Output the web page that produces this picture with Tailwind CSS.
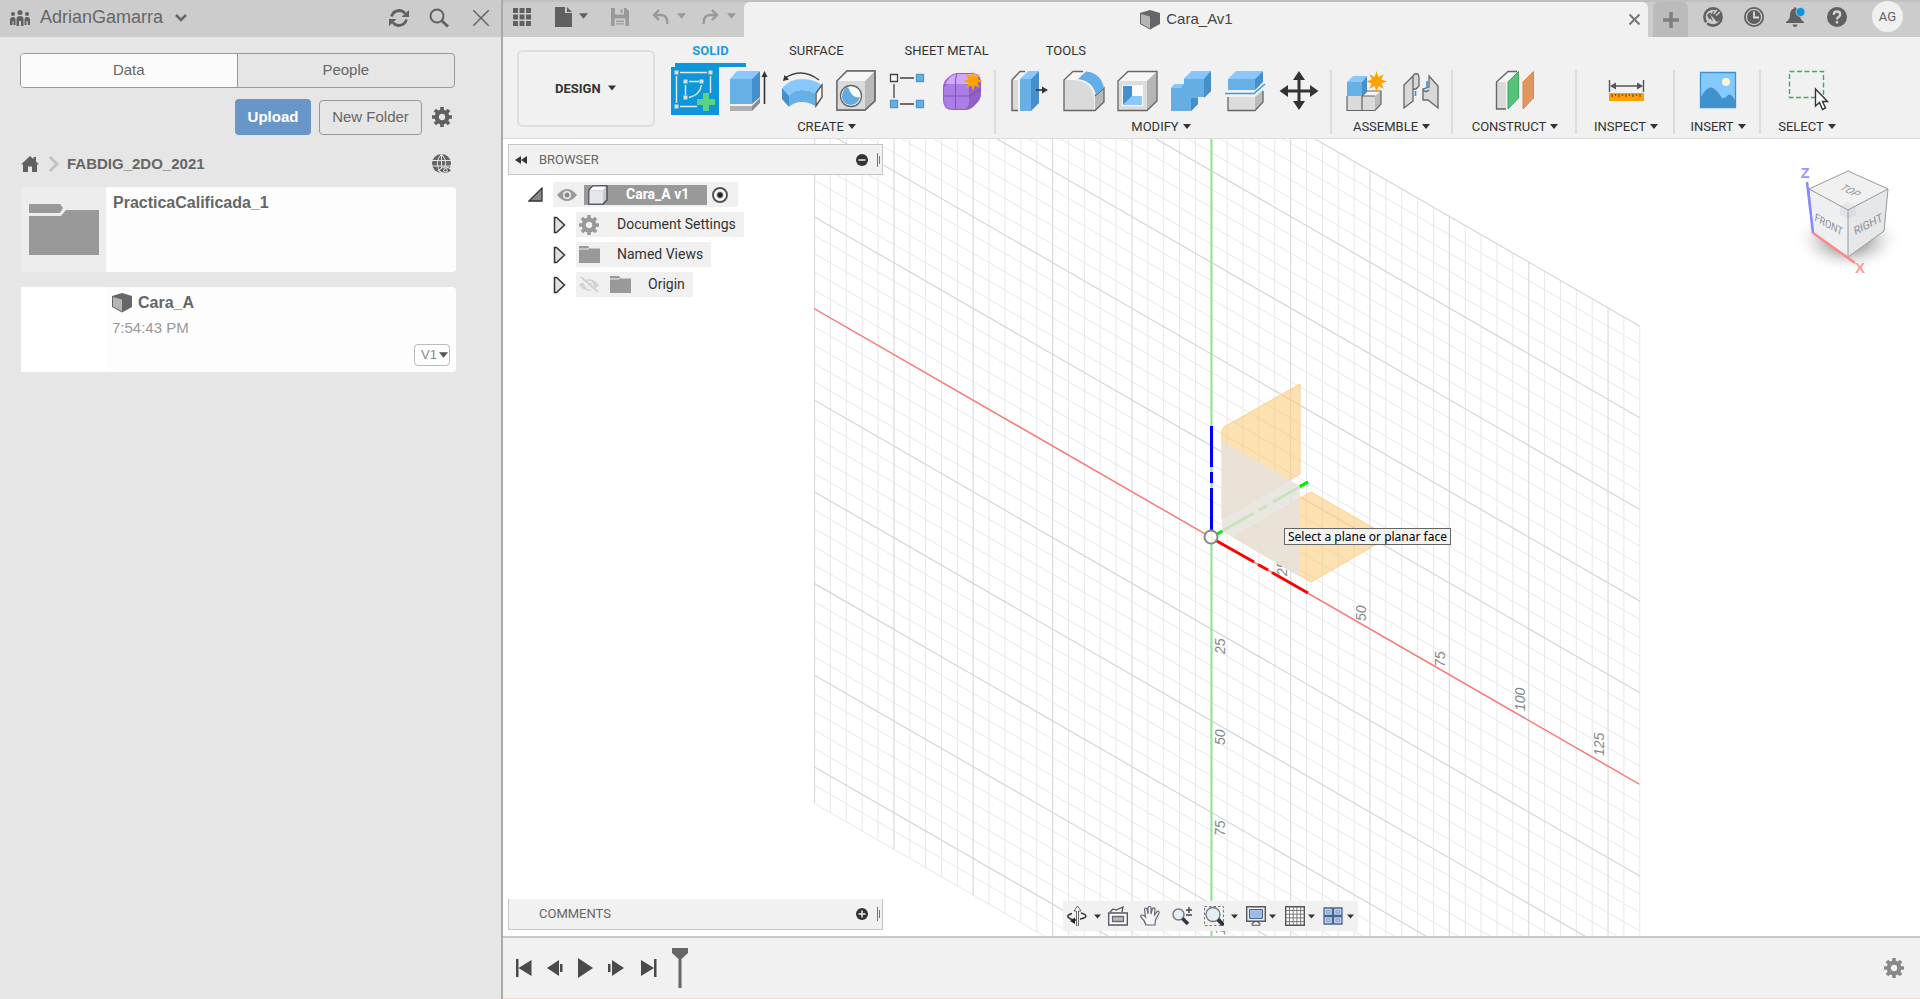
<!DOCTYPE html>
<html lang="en">
<head>
<meta charset="utf-8">
<title>Cara_A v1</title>
<script src="https://cdn.jsdelivr.net/npm/@tailwindcss/browser@4"></script>
</head>
<body class="flex h-screen overflow-hidden bg-[#f1f1f1] font-['Roboto','Liberation_Sans',sans-serif] text-[#333]">

<!-- Shared shapes -->
<svg class="hidden" aria-hidden="true">
  <symbol id="caret" viewBox="0 0 10 6"><path d="M0 0H10L5 6Z" fill="currentColor"/></symbol>
  <symbol id="part" viewBox="0 0 20 20"><path d="M0 3 10 0 20 3V14L10 19.500 0 14Z" fill="#666"/><path d="M1 4 10 6.500V18.500L1 13.500Z" fill="#b5b5b5"/></symbol>
  <symbol id="gear" viewBox="0 0 20 20"><g fill="none" stroke="currentColor"><circle cx="10" cy="10" r="5.300" stroke-width="4.200"/><path d="M10 0V4M10 16V20M0 10H4M16 10H20M2.900 2.900 5.600 5.600M14.400 14.400 17.100 17.100M2.900 17.100 5.600 14.400M14.400 5.600 17.100 2.900" stroke-width="3.600"/></g></symbol>
  <symbol id="folder" viewBox="0 0 21 17"><path d="M0 0H9L11 2.500H21V17H0Z" fill="#999"/><path d="M0 3H9L10.500 1.500" fill="none" stroke="#eee"/></symbol>
  <symbol id="expand" viewBox="0 0 13 18"><path d="M1.500 1.500H3.500L11.500 9 3.500 16.500H1.500Z" fill="#e0e0e0" stroke="#333" stroke-width="1.500"/></symbol>
  <symbol id="star" viewBox="0 0 20 20"><path d="M10 0 11.800 5.600 17 3 14.400 8.200 20 10 14.400 11.800 17 17 11.800 14.400 10 20 8.200 14.400 3 17 5.600 11.800 0 10 5.600 8.200 3 3 8.200 5.600Z" fill="#ffa200"/></symbol>
</svg>

<aside class="flex w-[503px] shrink-0 flex-col border-r-2 border-[#a9a9a9] bg-[#e6e6e6] font-['Liberation_Sans',sans-serif] text-[#666]">
  <header class="flex h-[37px] items-center bg-[#ccc] pr-3 pb-0.5 pl-[10px]">
    <svg class="h-4 w-5" viewBox="0 0 20 16" fill="#606060"><circle cx="10" cy="2.500" r="2.500"/><circle cx="3" cy="4" r="2"/><circle cx="17" cy="4" r="2"/><path d="M6.500 16V9Q6.500 6 10 6T13.500 9V16H11V11H9V16ZM0 15V10Q0 7 3 7 5.500 7 5.500 10V15H3.500V11H2.500V15ZM14.500 15V10Q14.500 7 17 7 20 7 20 10V15H17.800V11H16.500V15Z"/></svg>
    <button type="button" class="ml-[10px] flex items-center gap-3 text-[18px]">AdrianGamarra
      <svg class="h-2 w-3" viewBox="0 0 12 8" fill="none" stroke="#666" stroke-width="2.500"><path d="M1 1 6 6 11 1"/></svg></button>
    <div class="ml-auto flex items-center gap-5">
      <button type="button" aria-label="Refresh"><svg class="h-5 w-5" viewBox="0 0 20 20" fill="none" stroke="#606060" stroke-width="2.800"><path d="M2.500 8.500Q4 3 10 2.500 14 2.500 16 5.500"/><path d="M17.500 11.500Q16 17 10 17.500 6 17.500 4 14.500"/><path d="M20 2V9H12.500ZM0 18V11H7.500Z" fill="#606060" stroke="none"/></svg></button>
      <button type="button" aria-label="Search"><svg class="h-5 w-5" viewBox="0 0 20 20" fill="none" stroke="#606060"><circle cx="8" cy="8" r="6.500" stroke-width="2"/><path d="M13 13 19 18.500" stroke-width="3"/></svg></button>
      <button type="button" aria-label="Close" class="ml-1"><svg class="h-4 w-4" viewBox="0 0 16 16" stroke="#666" stroke-width="1.500"><path d="M0 0 16 16M16 0 0 16"/></svg></button>
    </div>
  </header>

  <div class="flex flex-col pt-4 pr-[46px] pl-5 text-[15px]">
    <div class="grid h-[35px] grid-cols-2 overflow-hidden rounded border border-[#999]">
      <button type="button" class="border-r border-[#999] bg-[#fbfbfb]">Data</button>
      <button type="button">People</button>
    </div>
    <div class="mt-[11px] flex items-center justify-end">
      <button type="button" class="h-9 w-[76px] rounded bg-[#6996c9] font-bold text-white">Upload</button>
      <button type="button" class="ml-2 h-[35px] w-[103px] rounded border border-[#999]">New Folder</button>
      <button type="button" aria-label="Settings" class="mr-[3px] ml-[10px]"><svg class="h-5 w-5 text-[#606060]"><use href="#gear"/></svg></button>
    </div>
    <nav class="mt-[18px] flex h-[22px] items-center" aria-label="Breadcrumb">
      <a href="#" aria-label="Home" class="ml-px"><svg class="h-4 w-[18px]" viewBox="0 0 18 16" fill="#606060"><path d="M9 0 12.500 3.200V1H15V5.500L18 8.500H16V16H11V10.500H7V16H2V8.500H0Z"/></svg></a>
      <svg class="ml-[9px] h-4 w-3" viewBox="0 0 12 16" fill="none" stroke="#c4c4c4" stroke-width="3"><path d="M2 1 9 8 2 15"/></svg>
      <a href="#" class="ml-[7px] font-bold">FABDIG_2DO_2021</a>
      <button type="button" aria-label="Open on the web" class="mr-[3px] ml-auto"><svg class="h-5 w-5" viewBox="0 0 20 20"><circle cx="9.500" cy="9.500" r="9.500" fill="#666"/><path d="M0 6.500H19M0 12H19M9.500 0V19M9.500 0Q1 9.500 9.500 19M9.500 0Q18 9.500 9.500 19" fill="none" stroke="#e6e6e6"/><path d="M6.500 16.500Q13.500 9.500 20 16.500 13.500 22 6.500 16.500Z" fill="#555" stroke="#e6e6e6" stroke-width="1.200"/><circle cx="13.500" cy="16.300" r="2.300" fill="#e6e6e6"/><circle cx="13.500" cy="16.300" r="1.200" fill="#555"/></svg></button>
    </nav>
    <ul class="mt-3 mr-[-1px] ml-px flex flex-col gap-[15px]">
      <li class="flex h-[85px] overflow-hidden rounded-r bg-[#fdfdfd]">
        <div class="flex w-[85px] items-center justify-center bg-[#ededed]"><svg class="h-[51px] w-[70px]" viewBox="0 0 70 51" fill="#999"><path d="M0 0H31L34 4 31 9H0ZM0 12H32L37 6H70V51H0Z"/></svg></div>
        <h2 class="px-[7px] pt-[6px] text-[16px] leading-5 font-bold">PracticaCalificada_1</h2>
      </li>
      <li class="flex h-[85px] overflow-hidden rounded-r bg-[#fdfdfd]">
        <div class="w-[85px] bg-white"></div>
        <div class="flex flex-1 flex-col px-[6px] pt-[6px] pb-[6px]">
          <h2 class="flex items-center gap-[6px] text-[16px] leading-5 font-bold"><svg class="h-5 w-5"><use href="#part"/></svg>Cara_A</h2>
          <p class="pt-[5px] leading-5 text-[#999]">7:54:43 PM</p>
          <div class="relative mt-auto self-end">
            <select aria-label="Version" class="block h-[22px] w-9 appearance-none rounded border border-[#bbb] bg-white pl-[6px] text-[13px] text-[#888]"><option>V1</option></select>
            <svg class="pointer-events-none absolute top-2 right-[2px] h-[6px] w-[9px] text-[#555]"><use href="#caret"/></svg>
          </div>
        </div>
      </li>
    </ul>
  </div>
</aside>

<main class="flex min-w-0 flex-1 flex-col">
  <header class="flex h-[37px] shrink-0 items-end border-t-2 border-[#c0c0c0] bg-[#ccc] text-[#606060]">
    <div class="flex h-[35px] w-[241px] shrink-0 items-center pb-[6px] pl-[10px]">
      <button type="button" aria-label="Show data panel"><svg class="h-[18px] w-[18px]" viewBox="0 0 18 18" fill="currentColor"><path d="M0 0H5V5H0ZM6.500 0H11.500V5H6.500ZM13 0H18V5H13ZM0 6.500H5V11.500H0ZM6.500 6.500H11.500V11.500H6.500ZM13 6.500H18V11.500H13ZM0 13H5V18H0ZM6.500 13H11.500V18H6.500ZM13 13H18V18H13Z"/></svg></button>
      <button type="button" aria-label="File" class="ml-6 flex items-center gap-[7px]"><svg class="h-5 w-[17px]" viewBox="0 0 17 20" fill="currentColor"><path d="M0 0H10V6H17V20H0ZM12 0 17 5H12Z"/></svg><svg class="mb-0.5 h-[6px] w-[9px]"><use href="#caret"/></svg></button>
      <button type="button" aria-label="Save" class="ml-[23px] text-[#999]"><svg class="h-[18px] w-[18px]" viewBox="0 0 18 18"><path d="M0 0H15L18 3V18H0Z" fill="currentColor"/><path d="M4 0H13V6.500H4ZM3.500 10.500H14.500V18H3.500Z" fill="#ccc"/><path d="M9.500 1.500H11.500V5H9.500ZM5 12.500H13V14H5ZM5 15.200H13V16.500H5Z" fill="currentColor"/></svg></button>
      <button type="button" aria-label="Undo" class="ml-[23px] flex items-center gap-2 text-[#999]"><svg class="h-4 w-[17px]" viewBox="0 0 17 16" fill="none" stroke="currentColor" stroke-width="2.400"><path d="M2 6H9Q15.500 6 15.500 15M7 1 2 6 7 11"/></svg><svg class="mb-0.5 h-[6px] w-[9px]"><use href="#caret"/></svg></button>
      <button type="button" aria-label="Redo" class="ml-4 flex items-center gap-2 text-[#999]"><svg class="h-4 w-[17px]" viewBox="0 0 17 16" fill="none" stroke="currentColor" stroke-width="2.400"><path d="M15 6H8Q1.500 6 1.500 15M10 1 15 6 10 11"/></svg><svg class="mb-0.5 h-[6px] w-[9px]"><use href="#caret"/></svg></button>
    </div>
    <div class="flex h-[35px] flex-1 items-center rounded-t-md bg-[#f1f1f1] pr-2 text-[#444]">
      <div class="flex flex-1 items-center justify-center gap-[6px] font-['Liberation_Sans',sans-serif] text-[15px]"><svg class="h-5 w-5"><use href="#part"/></svg>Cara_Av1</div>
      <button type="button" aria-label="Close document"><svg class="h-[11px] w-[11px]" viewBox="0 0 11 11" stroke="#777" stroke-width="2"><path d="M.500.500 10.500 10.500M10.500.500.500 10.500"/></svg></button>
    </div>
    <button type="button" aria-label="New document" class="ml-[5px] flex h-[35px] w-[35px] items-center justify-center rounded-t-md bg-[#bbb]"><svg class="h-4 w-4" viewBox="0 0 16 16" stroke="#808080" stroke-width="3.500"><path d="M8 0V16M0 8H16"/></svg></button>
    <div class="flex h-[35px] items-center pr-[17px] pb-[6px] pl-[15px]">
      <button type="button" aria-label="Extensions"><svg class="h-5 w-5" viewBox="0 0 20 20"><circle cx="10" cy="10" r="8.600" fill="none" stroke="currentColor" stroke-width="2.600"/><path d="M7 7 14 15 17 13 18 8 14 3 12 5 10 4 9 7 7 5.500 4 8 6 12 10 14Z" fill="currentColor"/><path d="M13 8.500 17 5M10.500 7 14 3M1 18 8 12" stroke="#ccc" stroke-width="1.500"/></svg></button>
      <button type="button" aria-label="Job status" class="ml-[21px]"><svg class="h-5 w-5" viewBox="0 0 20 20"><circle cx="10" cy="10" r="10" fill="currentColor"/><circle cx="10" cy="10" r="7.600" fill="none" stroke="#ccc" stroke-width="1.300"/><path d="M10 4.500V10.500H15" fill="none" stroke="#ddd" stroke-width="1.800"/></svg></button>
      <button type="button" aria-label="Notifications" class="ml-[22px]"><svg class="h-5 w-[19px]" viewBox="0 0 19 20"><path d="M9 0Q10 0 10 1.500 14 2.500 14 8 14 13 18 15V16H0V15Q4 13 4 8 4 2.500 8 1.500 8 0 9 0ZM6.500 17.500H11.500Q11 20 9 20T6.500 17.500Z" fill="currentColor"/><circle cx="14.500" cy="5" r="4.500" fill="#0a96dc" stroke="#ccc" stroke-width=".800"/></svg></button>
      <button type="button" aria-label="Help" class="ml-[22px]"><svg class="h-5 w-5" viewBox="0 0 20 20"><circle cx="10" cy="10" r="10" fill="currentColor"/><path d="M6.800 7.800Q6.800 4.500 10 4.500T13.200 7.500Q13.200 9 11.500 10 10 11 10 12.500M10 14V16.400" fill="none" stroke="#d4d4d4" stroke-width="2.300"/></svg></button>
      <button type="button" aria-label="Account" class="ml-[25px] h-[31px] w-[31px] rounded-full bg-[#f0f0f0] text-[13px]">AG</button>
    </div>
  </header>

  <div class="flex h-[102px] shrink-0 border-b border-[#dcdcdc] pl-[14px]">
    <div class="relative mt-[13px] h-[77px] w-[138px] shrink-0">
      <select aria-label="Workspace" class="h-full w-full appearance-none rounded-md border-2 border-[#dedede] bg-[#f1f1f1] pl-9 text-[13px] font-bold"><option>DESIGN</option></select>
      <svg class="pointer-events-none absolute top-[35px] right-[39px] h-[6px] w-2"><use href="#caret"/></svg>
    </div>
    <div class="ml-2 flex flex-col">
      <nav class="ml-3 flex h-[30px] items-end text-[13px] leading-5" aria-label="Toolbar tabs">
        <a href="#" class="h-[26px] w-[71px] border-b-4 border-[#0d96d9] text-center font-bold text-[#1b9cdc]">SOLID</a>
        <a href="#" class="ml-[43px] h-[26px]">SURFACE</a>
        <a href="#" class="ml-[61px] h-[26px]">SHEET METAL</a>
        <a href="#" class="ml-[57px] h-[26px]">TOOLS</a>
      </nav>
      <div class="flex text-[13px]">
        <section class="relative flex w-[333px] flex-col items-center">
          <div class="flex">
            <button type="button" aria-label="Create sketch" class="w-[54px] px-[3px]"><svg class="h-12 w-12" viewBox="0 0 48 48" fill="none"><path d="M0 0H48V48H0Z" fill="#0d96d9"/><path d="M9 5.500H36M5.500 9V36M39.500 9V26M9 39.500H26M18 14.500H28M14.500 18V28M30.500 18Q29 28 18 30.500" stroke="#e8e8e8" stroke-width="1.400"/><path d="M3.500 3.500H7.500V7.500H3.500ZM37.500 3.500H41.500V7.500H37.500ZM3.500 37.500H7.500V41.500H3.500ZM12.500 12.500H16.500V16.500H12.500ZM28.500 12.500H32.500V16.500H28.500ZM12.500 28.500H16.500V32.500H12.500Z" fill="#dcdcdc"/><path d="M35 26V44M26 35H44" stroke="#5ad28a" stroke-width="6"/></svg></button>
            <button type="button" aria-label="Extrude" class="w-[54px] px-[3px]"><svg class="h-12 w-12" viewBox="0 0 48 48"><path d="M5 12 12 4H35L27 12Z" fill="#8ac8fb"/><path d="M5 12H27V37H5Z" fill="#66b0e5"/><path d="M27 12 35 4V30L27 37Z" fill="#4590cc"/><path d="M5 39H27V44H5Z" fill="#b0b0b0"/><path d="M27 39 35 31V36L27 44Z" fill="#8c8c8c"/><path d="M39.500 8V37" stroke="#333" stroke-width="1.600"/><path d="M36.500 10 39.500 4 42.500 10Z" fill="#333"/></svg></button>
            <button type="button" aria-label="Revolve" class="w-[54px] px-[3px]"><svg class="h-12 w-12" viewBox="0 0 48 48"><path d="M3 21Q11 12 23 12 35 12 43 18L36 26Q30 23 23 23 15 23 10 30Z" fill="#8ac8fb"/><path d="M3 21 10 29V40L3 32Z" fill="#4590cc"/><path d="M10 29Q15 23 23 23 30 23 36 26V39Q30 35 23 35 15 35 10 40Z" fill="#66b0e5"/><path d="M37 26 43 18V30L37 39Z" fill="#fafafa" stroke="#555" stroke-width="1.400"/><path d="M40 13Q23 0 6 11" fill="none" stroke="#444" stroke-width="1.500"/><path d="M4 14 5.500 8 10 12.500Z" fill="#333"/></svg></button>
            <button type="button" aria-label="Hole" class="w-[54px] px-[3px]"><svg class="h-12 w-12" viewBox="0 0 48 48" stroke="#666" stroke-width="1.300"><path d="M4 14 14 4H42V34L32 43H4Z" fill="#b9b9b9"/><path d="M4 14 14 4H42L32 14Z" fill="#f6f6f6" stroke="none"/><path d="M4 14H32V43H4Z" fill="#dadada" stroke="none"/><path d="M4 14 14 4H42V34L32 43H4Z" fill="none"/><circle cx="18" cy="29" r="10.500" fill="#fafafa"/><path d="M15 20Q19 32 27 30 25 38 17 38 9 37 9 29 10 21 15 20Z" fill="#5fabe2" stroke="none"/></svg></button>
            <button type="button" aria-label="Rectangular pattern" class="w-[54px] px-[3px]"><svg class="h-12 w-12" viewBox="0 0 48 48" stroke-width="1.300"><path d="M13 11H27M7 17V31M13 37H27" stroke="#444"/><path d="M3.500 7.500H10.500V14.500H3.500Z" fill="#f8f8f8" stroke="#444"/><path d="M29.500 7.500H36.500V14.500H29.500ZM3.500 33.500H10.500V40.500H3.500ZM29.500 33.500H36.500V40.500H29.500Z" fill="#66b0e5" stroke="#5596c8"/></svg></button>
            <button type="button" aria-label="Create form" class="w-[54px] px-[3px]"><svg class="h-12 w-12" viewBox="0 0 48 48"><path d="M2 20Q2 14 9 9 12 6 18 6H32Q40 7 40 15V27Q40 33 34 38 30 43 24 43H12Q2 43 2 33Z" fill="#9060c8"/><path d="M4 17Q9 8 15 7H34Q38 9 38 12L31 17Z" fill="#d3a8fb"/><path d="M3 20Q5 17 9 17H24Q28 17 28 22V35Q28 42 22 42H12Q3 42 3 33Z" fill="#ab7ee6"/><path d="M16 6Q14 12 14.500 18V42M3 29H28L40 22M28 18Q34 10 38 11" fill="none" stroke="#7c50b4"/><use href="#star" x="22" y="4" width="20" height="20"/></svg></button>
          </div>
          <button type="button" class="mt-1 flex items-center gap-1 pr-[6px] leading-4">CREATE<svg class="mb-0.5 h-[5px] w-2"><use href="#caret"/></svg></button>
          <i class="absolute top-[3px] right-0 h-16 w-0.5 bg-[#ddd]"></i>
        </section>
        <section class="relative flex w-[336px] flex-col items-center">
          <div class="flex">
            <button type="button" aria-label="Press pull" class="w-[54px] px-[3px]"><svg class="h-12 w-12" viewBox="0 0 48 48"><path d="M7 13 15 4.500H21L14 13V43H7Z" fill="#f4f4f4"/><path d="M7 13H13V43H7Z" fill="#dadada"/><path d="M20 4.500H15L7 13V43.500H13" fill="none" stroke="#666" stroke-width="1.400"/><path d="M15 12 23 4H34L26 12Z" fill="#8ac8fb"/><path d="M15 12H26V44H15Z" fill="#66b0e5"/><path d="M26 12 34 4V36L26 44Z" fill="#4590cc"/><path d="M31 23H39" stroke="#333" stroke-width="1.600"/><path d="M37 19.500 43 23 37 26.500Z" fill="#333"/></svg></button>
            <button type="button" aria-label="Fillet" class="w-[54px] px-[3px]"><svg class="h-12 w-12" viewBox="0 0 48 48" stroke-width="1.300"><path d="M5 13 14 4.500H24L17 13Z" fill="#f6f6f6"/><path d="M36 28 45 20V35L36 43.500Z" fill="#b9b9b9"/><path d="M5 13H16Q34 15 35 32V43.500H5Z" fill="#dadada"/><path d="M24 4.500H14L5 13V43.500H36L45 35V21L36 29" fill="none" stroke="#666"/><path d="M27 4.500Q42 6 45 21L37 28Q34 14 19 12Z" fill="#62aee6"/></svg></button>
            <button type="button" aria-label="Shell" class="w-[54px] px-[3px]"><svg class="h-12 w-12" viewBox="0 0 48 48"><path d="M5 14 15 4.500H44V34L34 43.500H5Z" fill="#b5b5b5"/><path d="M5 14 15 4.500H44L34 14Z" fill="#f6f6f6"/><path d="M5 14H34V43.500H5Z" fill="#dcdcdc"/><path d="M5 14 15 4.500H44V34L34 43.500H5Z" fill="none" stroke="#666" stroke-width="1.300"/><path d="M9 18H30V39H9Z" fill="#fafafa"/><path d="M10 38 19 29H29V38Z" fill="#8ac8fb"/><path d="M10 19H19V29L10 38Z" fill="#4590cc"/></svg></button>
            <button type="button" aria-label="Combine" class="w-[54px] px-[3px]"><svg class="h-12 w-12" viewBox="0 0 48 48"><path d="M4 21 8 17H17V12L25 4H44V24L37 30H31V37L24 44H4Z" fill="#64aee4"/><path d="M17 12 25 4H44L37 12ZM4 21 8 17H17L14 21Z" fill="#86c6fa"/><path d="M37 12 44 4V24L37 31ZM24 31H31V37L24 44Z" fill="#4590cc"/></svg></button>
            <button type="button" aria-label="Split body" class="w-[54px] px-[3px]"><svg class="h-12 w-12" viewBox="0 0 48 48"><path d="M7 12 15 4H42L34 12Z" fill="#8ac8fb"/><path d="M7 12H34V23H7Z" fill="#66b0e5"/><path d="M34 12 42 4V15L34 23Z" fill="#4590cc"/><path d="M7 30H34V43H7Z" fill="#dcdcdc"/><path d="M34 30 42 23V35L34 43Z" fill="#bbb"/><path d="M7 30V43.500H34L42 35V24" fill="none" stroke="#666" stroke-width="1.300"/><path d="M4 26.500H33L44 17" fill="none" stroke="#3a9be6" stroke-width="1.600"/></svg></button>
            <button type="button" aria-label="Move" class="w-[54px] px-[3px]"><svg class="h-12 w-12" viewBox="0 0 48 48"><path d="M24 10V38M10 24H38" stroke="#333" stroke-width="3"/><path d="M24 4 30 13H18ZM24 43 18 34H30ZM4.500 24 13 18V30ZM43.500 24 35 30V18Z" fill="#333"/></svg></button>
          </div>
          <button type="button" class="mt-1 flex items-center gap-1 pr-[6px] leading-4">MODIFY<svg class="mb-0.5 h-[5px] w-2"><use href="#caret"/></svg></button>
          <i class="absolute top-[3px] right-0 h-16 w-0.5 bg-[#ddd]"></i>
        </section>
        <section class="relative flex w-[121px] flex-col items-center">
          <div class="flex">
            <button type="button" aria-label="New component" class="w-[54px] px-[3px]"><svg class="h-12 w-12" viewBox="0 0 48 48"><path d="M5 28H33L39 24V37L33 43.500H5Z" fill="#bbb"/><path d="M5 29H20V43H5ZM20 29H33V43H20Z" fill="#dadada"/><path d="M20 29 25 24H39L33 29Z" fill="#f5f5f5"/><path d="M5 29V43.500H33L39 37V24H25L20 29V43M20 29H33" fill="none" stroke="#666" stroke-width="1.200"/><path d="M5 15 11 9H25L20 15Z" fill="#8ac8fb"/><path d="M5 15H20V29H5Z" fill="#66b0e5"/><path d="M20 15 25 9V24L20 29Z" fill="#4590cc"/><use href="#star" x="24" y="4" width="21" height="21"/></svg></button>
            <button type="button" aria-label="Joint" class="w-[54px] px-[3px]"><svg class="h-12 w-12" viewBox="0 0 48 48" fill="#d8d8d8" stroke="#666" stroke-width="1.300"><path d="M8 18 17 9V34L8 41ZM17 9Q18 6 22 7L23 10V19L20 22H17Z"/><path d="M33 9 42 19V41L32 33H27V22L33 20Z"/><path d="M27 23Q30 26 33 23" fill="none"/><path d="M19.500 24V29M31 14V21" stroke="#2a94e6" stroke-width="1.600"/></svg></button>
          </div>
          <button type="button" class="mt-1 flex items-center gap-1 pr-0.5 leading-4">ASSEMBLE<svg class="mb-0.5 h-[5px] w-2"><use href="#caret"/></svg></button>
          <i class="absolute top-[3px] right-0 h-16 w-0.5 bg-[#ddd]"></i>
        </section>
        <section class="relative flex w-[124px] flex-col items-center">
          <button type="button" aria-label="Offset plane"><svg class="h-12 w-12" viewBox="0 0 48 48"><path d="M5.500 15 17 4.500H26L16 15V42H5.500Z" fill="#f6f6f6"/><path d="M5.500 15H15V42H5.500Z" fill="#dadada"/><path d="M26 4.500H17L5.500 15V42H15" fill="none" stroke="#666" stroke-width="1.400"/><path d="M17 15 27.500 4.500V31L17 42Z" fill="#56c37a" stroke="#3aa860"/><path d="M32 15 42.500 4.500V31L32 42Z" fill="#e39560" stroke="#d8844c"/></svg></button>
          <button type="button" class="mt-1 flex items-center gap-1 leading-4">CONSTRUCT<svg class="mb-0.5 h-[5px] w-2"><use href="#caret"/></svg></button>
          <i class="absolute top-[3px] right-0 h-16 w-0.5 bg-[#ddd]"></i>
        </section>
        <section class="relative flex w-[98px] flex-col items-center">
          <button type="button" aria-label="Measure"><svg class="h-12 w-12" viewBox="0 0 48 48"><path d="M7.500 13V25M41.500 13V25M9 19H40" stroke="#555" stroke-width="1.400"/><path d="M8 19 14 15.500V22.500ZM41 19 35 15.500V22.500Z" fill="#555"/><path d="M7 26H42V34H7Z" fill="#ffa200"/><path d="M10 27V30M13.500 27V29M17 27V30M20.500 27V29M24 27V30M27.500 27V29M31 27V30M34.500 27V29M38 27V30" stroke="#7a5200" stroke-width="1.300"/></svg></button>
          <button type="button" class="mt-1 flex items-center gap-1 leading-4">INSPECT<svg class="mb-0.5 h-[5px] w-2"><use href="#caret"/></svg></button>
          <i class="absolute top-[3px] right-0 h-16 w-0.5 bg-[#ddd]"></i>
        </section>
        <section class="relative flex w-[86px] flex-col items-center">
          <button type="button" aria-label="Insert canvas"><svg class="h-12 w-12" viewBox="0 0 48 48"><path d="M6.500 5.500H41.500V40.500H6.500Z" fill="#84caff"/><path d="M6.500 31Q12 20 17 20.500 21 20 28 31 31 32 34 28 37 26 41.500 34V40.500H6.500Z" fill="#3f92cd"/><path d="M6.500 5.500H41.500V40.500H6.500Z" fill="none" stroke="#3f92cd" stroke-width="1.300"/><circle cx="32" cy="15" r="4" fill="#fdf7d0"/></svg></button>
          <button type="button" class="mt-1 flex items-center gap-1 leading-4">INSERT<svg class="mb-0.5 h-[5px] w-2"><use href="#caret"/></svg></button>
          <i class="absolute top-[3px] right-0 h-16 w-0.5 bg-[#ddd]"></i>
        </section>
        <section class="flex w-[92px] flex-col items-center">
          <button type="button" aria-label="Select"><svg class="h-12 w-12" viewBox="0 0 48 48"><path d="M6.500 4.500H40.500V30.500H6.500Z" fill="none" stroke="#34b05c" stroke-width="1.400" stroke-dasharray="5 2.500"/><path d="M32.500 22V39L36.500 35.500 39.500 42.500 42.500 41 39.500 34.500H44.500Z" fill="#fff" stroke="#333" stroke-width="1.400"/></svg></button>
          <button type="button" class="mt-1 flex items-center gap-1 leading-4">SELECT<svg class="mb-0.5 h-[5px] w-2"><use href="#caret"/></svg></button>
        </section>
      </div>
    </div>
  </div>

  <!-- Model canvas: shapes share one screen-space coordinate system -->
  <div class="relative min-h-0 flex-1 overflow-hidden bg-white">
    <svg class="absolute inset-0 h-full w-full" aria-label="Model canvas">
      <g transform="translate(-503 -139)" fill="none">
        <g id="grid"></g>
        <path d="M1211.500 100V940" stroke="#8fe690" stroke-width="2"/>
        <path d="M814 308.500 1639 784" stroke="#f77" stroke-width="1.400"/>
        <g font-family="Liberation Sans, sans-serif" font-size="14" font-style="italic" fill="#888">
          <text transform="translate(1287 576) rotate(-90)">25</text>
          <text transform="translate(1366 621) rotate(-90)">50</text>
          <text transform="translate(1445 667) rotate(-90)">75</text>
          <text transform="translate(1525 711) rotate(-90)">100</text>
          <text transform="translate(1604 756) rotate(-90)">125</text>
          <text transform="translate(1225 654) rotate(-90)">25</text>
          <text transform="translate(1225 745) rotate(-90)">50</text>
          <text transform="translate(1225 836) rotate(-90)">75</text>
          <text transform="translate(1225 935) rotate(-90)">100</text>
        </g>
        <g fill="#fdc871" fill-opacity=".55" stroke="#fbd08a">
          <path d="M1222 430 1224 427 1300 384V474L1222 519Z"/>
          <path d="M1311 492 1389 537 1311 582 1233 537Z"/>
        </g>
        <path d="M1217 534 1254 513M1259 510 1267 505.500M1273 502 1308 482" stroke="#0e0e" stroke-width="3"/>
        <path d="M1222 441 1300 486V577L1222 531Z" fill="#e7e2dc" fill-opacity=".86"/>
        <path d="M1300 486.500 1308 482M1217 534 1222 531.500" stroke="#0e0" stroke-width="3"/>
        <path d="M1211.500 426V467M1211.500 472V483M1211.500 488V532" stroke="#00f" stroke-width="3"/>
        <path d="M1215 540 1254 562M1258 564.500 1268 570M1272 572.500 1308 593" stroke="#f00" stroke-width="3"/>
        <circle cx="1211" cy="537" r="6.500" fill="#fff" fill-opacity=".8" stroke="#888" stroke-width="2"/>
      </g>
    </svg>

    <section class="absolute top-[5px] left-[5px] w-[375px] text-[14px]">
      <header class="flex h-[31px] items-center border border-[#c6c6c6] bg-[#f1f1f1] pl-[6px] text-[13px] text-[#666]">
        <svg class="h-2 w-3" viewBox="0 0 12 8" fill="#333"><path d="M6 0V8L0 4ZM12 0V8L6 4Z"/></svg>
        <h2 class="ml-3 flex-1">BROWSER</h2>
        <button type="button" aria-label="Collapse browser"><svg class="h-3 w-3" viewBox="0 0 12 12"><circle cx="6" cy="6" r="6" fill="#333"/><path d="M2.500 6H9.500" stroke="#eee" stroke-width="1.500"/></svg></button>
        <i class="ml-[9px] h-[14px] w-px bg-[#777]"></i><i class="mr-[2px] ml-px h-2 w-px bg-[#777]"></i>
      </header>
      <ul class="mt-[7px] flex flex-col gap-[5px] leading-[25px]">
        <li class="flex items-center pl-[20px]">
          <svg class="h-[15px] w-[15px]" viewBox="0 0 15 15"><path d="M1 14 14 1V14Z" fill="#888" stroke="#333" stroke-width="1.300"/></svg>
          <div class="ml-[10px] flex h-[25px] items-center bg-[#f0f0f0] pr-[10px] pl-1">
            <svg class="h-3 w-5" viewBox="0 0 20 12"><path d="M0 6Q10-6 20 6 10 18 0 6Z" fill="#999"/><circle cx="10" cy="6" r="4" fill="#eee"/><circle cx="10" cy="6" r="2.500" fill="#888"/></svg>
            <div class="ml-[7px] flex h-5 w-[123px] items-center bg-[#999] pl-1 text-[14px] font-bold text-white">
              <svg class="h-5 w-5" viewBox="0 0 20 20" stroke="#445" stroke-width="1.300"><path d="M1 5 5 1H19V15L15 19H1Z" fill="#c8c8ce"/><path d="M1.500 5.500H15V18.500H1.500Z" fill="#e6e7ec" stroke="none"/><path d="M2 5 5 1.500H18L15 5Z" fill="#fff" stroke="none"/></svg>
              <span class="ml-[18px]">Cara_A v1</span>
            </div>
            <input type="radio" checked aria-label="Activate component" class="ml-[5px] h-4 w-4 appearance-none rounded-full border-2 border-[#555] bg-[radial-gradient(circle,#222_2px,#fff_4px)]">
          </div>
        </li>
        <li class="flex items-center pl-[45px]"><svg class="h-[18px] w-[13px]"><use href="#expand"/></svg><div class="ml-[10px] flex items-center bg-[#f0f0f0] pr-2 pl-[3px]"><svg class="mr-[18px] h-5 w-5 text-[#999]"><use href="#gear"/></svg>Document Settings</div></li>
        <li class="flex items-center pl-[45px]"><svg class="h-[18px] w-[13px]"><use href="#expand"/></svg><div class="ml-[10px] flex items-center bg-[#f0f0f0] pr-2 pl-[3px]"><svg class="mr-[17px] h-[17px] w-[21px]"><use href="#folder"/></svg>Named Views</div></li>
        <li class="flex items-center pl-[45px]"><svg class="h-[18px] w-[13px]"><use href="#expand"/></svg><div class="ml-[10px] flex items-center bg-[#f0f0f0] pr-2 pl-[3px]"><svg class="mr-[11px] h-4 w-5" viewBox="0 0 20 16"><path d="M0 8Q10-4 20 8 10 20 0 8Z" fill="#d4d4d4"/><circle cx="10" cy="8" r="3.500" fill="none" stroke="#f0f0f0" stroke-width="1.500"/><path d="M1 1 19 16" stroke="#f0f0f0" stroke-width="4"/><path d="M2 0 19 15" stroke="#d0d0d0" stroke-width="1.800"/></svg><svg class="mr-[17px] h-[17px] w-[21px]"><use href="#folder"/></svg>Origin</div></li>
      </ul>
    </section>

    <section class="absolute bottom-[6px] left-[5px] flex h-[31px] w-[375px] items-center border border-t-0 border-[#c6c6c6] bg-[#f1f1f1] pl-[30px] text-[13px] text-[#666]">
      <h2 class="flex-1">COMMENTS</h2>
      <button type="button" aria-label="Add comment"><svg class="h-3 w-3" viewBox="0 0 12 12"><circle cx="6" cy="6" r="6" fill="#333"/><path d="M2.500 6H9.500M6 2.500V9.500" stroke="#eee" stroke-width="1.500"/></svg></button>
      <i class="ml-[9px] h-[14px] w-px bg-[#777]"></i><i class="mr-[2px] ml-px h-2 w-px bg-[#777]"></i>
    </section>

    <p class="absolute top-[389px] left-[781px] border border-[#666] bg-[#f3f3f3] px-[3px] font-['Noto_Sans',sans-serif] text-[12px] leading-[15px] text-black">Select a plane or planar face</p>

    <!-- View cube -->
    <svg class="absolute top-[1px] right-0 h-[150px] w-40" viewBox="0 0 160 150" aria-label="View cube">
      <defs><radialGradient id="shade"><stop offset=".400" stop-color="#999" stop-opacity=".700"/><stop offset="1" stop-color="#fff" stop-opacity="0"/></radialGradient></defs>
      <ellipse cx="88" cy="99" rx="54" ry="34" fill="url(#shade)"/>
      <path d="M49 49 88 31 128 49 124 91 88 117 53 93Z" fill="#f1f1f1"/>
      <path d="M88 70 128 49 124 91 88 117Z" fill="#e6e7e8"/>
      <path d="M49 49 88 70V117L53 93Z" fill="#eeeff0"/>
      <path d="M49 49 88 31 128 49 124 91 88 117 53 93ZM49 49 88 70 128 49M88 70V117" fill="none" stroke="#999"/>
      <path d="M80 66 88 62 96 66V75L88 79 80 75Z" fill="#9ab" fill-opacity=".150"/>
      <path d="M47 42 53 93" stroke="#88f" stroke-width="2.500"/><path d="M53 93 95 123" stroke="#f88" stroke-width="2.500"/>
      <g font-family="Roboto, Liberation Sans, sans-serif" font-size="11" fill="#8a8f96" text-anchor="middle">
        <text transform="translate(68 88) rotate(29) skewX(18)" font-size="10">FRONT</text>
        <text transform="translate(109 88) rotate(-27) skewX(-15)">RIGHT</text>
        <text transform="translate(87 53) rotate(27) skewX(-30)" font-size="10">TOP</text>
      </g>
      <g font-family="Liberation Sans, sans-serif" font-size="15" font-weight="bold" text-anchor="middle"><text x="45" y="38" fill="#99f">Z</text><text x="100" y="133" fill="#f99">X</text></g>
    </svg>

    <div class="absolute bottom-[5px] left-[560px] flex h-[30px] items-center bg-[#f1f1f1] px-1 text-[#333]" role="toolbar" aria-label="Navigation">
      <button type="button" aria-label="Orbit" class="flex items-center gap-[7px]"><svg class="h-5 w-5" viewBox="0 0 20 20" fill="none"><path d="M5 7.500Q0 9 1 11 4 14.500 10 14M14 7Q20 8.500 18.500 11 17 12.500 13 13" stroke="#333" stroke-width="1.500"/><path d="M9.500 20V5H7L10.500 0 14 5H11.500V20Z" fill="#fff" stroke="#666"/><path d="M3 15 8 11.500V18Z" fill="#222"/></svg><svg class="h-[5px] w-[7px]"><use href="#caret"/></svg></button>
      <button type="button" aria-label="Look at" class="ml-[7px]"><svg class="h-5 w-5" viewBox="0 0 20 20"><path d="M.700 7H19.300V19H.700Z" fill="#fff" stroke="#556" stroke-width="1.400"/><path d="M4.500 10.500H15.500V15.500H4.500Z" fill="#bbb" stroke="#667" stroke-width="1.300"/><path d="M2 6 5 3 8 4 15 1 14 6" fill="none" stroke="#556" stroke-width="1.300"/></svg></button>
      <button type="button" aria-label="Pan" class="ml-3"><svg class="h-5 w-5" viewBox="0 0 20 20"><path d="M6 19Q5 15 1 11 0 9 2 9 4 9 5.500 11L4.500 3Q5.500 1 7 3L8 8V1.500Q9.500-.500 11 1.500V8L12.500 2.500Q14.500 1 15 3L14.500 9 17.500 5Q19.500 5 19 7L15.500 14 15 19Z" fill="#f6f6f6" stroke="#667" stroke-width="1.200"/></svg></button>
      <button type="button" aria-label="Zoom" class="ml-3"><svg class="h-5 w-5" viewBox="0 0 20 20" fill="none"><circle cx="6.500" cy="8.500" r="5.500" fill="#e2f0f2" stroke="#778" stroke-width="1.400"/><path d="M10.500 12.500 16 18" stroke="#334" stroke-width="3.500"/><path d="M14 4H20M17 1V7M14 9H20" stroke="#444" stroke-width="1.400"/></svg></button>
      <button type="button" aria-label="Fit" class="ml-3 flex items-center gap-[7px]"><svg class="h-5 w-5" viewBox="0 0 20 20" fill="none"><path d="M.500.500H19.500V19.500H.500Z" stroke="#777" stroke-dasharray="2.500 2"/><circle cx="9" cy="8.500" r="7" fill="#e2f0f2" stroke="#778" stroke-width="1.400"/><path d="M14 13.500 19.500 19" stroke="#333" stroke-width="4"/></svg><svg class="h-[5px] w-[7px]"><use href="#caret"/></svg></button>
      <button type="button" aria-label="Display settings" class="ml-[8px] flex items-center gap-[3px]"><svg class="h-5 w-5" viewBox="0 0 20 20"><path d="M.700.700H19.300V15.300H.700Z" fill="#eee" stroke="#556" stroke-width="1.400"/><path d="M3.500 3.500H16.500V12.500H3.500Z" fill="#a0bce6" stroke="#4a6a9c"/><path d="M8 15.500H12V17H14V19.300H6V17H8Z" fill="#eee" stroke="#556"/></svg><svg class="h-[5px] w-[7px]"><use href="#caret"/></svg></button>
      <button type="button" aria-label="Grid and snaps" class="ml-[9px] flex items-center gap-[3px]"><svg class="h-5 w-5" viewBox="0 0 20 20"><path d="M.700.700H19.300V19.300H.700Z" fill="#fff" stroke="#555" stroke-width="1.400"/><path d="M4.500 1V19M8.200 1V19M11.900 1V19M15.600 1V19M1 4.500H19M1 8.200H19M1 11.900H19M1 15.600H19" stroke="#777"/></svg><svg class="h-[5px] w-[7px]"><use href="#caret"/></svg></button>
      <button type="button" aria-label="Viewports" class="ml-[8px] flex items-center gap-[4px]"><svg class="h-[18px] w-5" viewBox="0 0 20 18" fill="#c0d2ee" stroke="#4a658f" stroke-width="1.300"><path d="M1 1H9.500V8.500H1ZM10.500 1H19V8.500H10.500ZM1 9.500H9.500V17H1ZM10.500 9.500H19V17H10.500Z"/><path d="M3.500 3.500H7V6H3.500ZM13 3.500H16.500V6H13ZM3.500 12H7V14.500H3.500ZM13 12H16.500V14.500H13Z" stroke="#7f9ccc" stroke-width="1"/></svg><svg class="h-[5px] w-[7px]"><use href="#caret"/></svg></button>
    </div>
  </div>

  <footer class="flex h-[63px] shrink-0 items-center border-t-2 border-b border-t-[#c8c8c8] border-b-[#f3dcd6] pr-4 pl-[13px] text-[#4a4a4a]">
    <button type="button" aria-label="Go to start"><svg class="h-5 w-4" viewBox="0 0 16 20" fill="currentColor"><path d="M0 1H2.500V19H0ZM2.500 10 15.500 2V18Z"/></svg></button>
    <button type="button" aria-label="Step back" class="ml-[14px]"><svg class="h-5 w-[18px]" viewBox="0 0 18 20" fill="currentColor"><path d="M1 10 13 2V18ZM14 6H16.500V14H14Z"/></svg></button>
    <button type="button" aria-label="Play" class="ml-[14px]"><svg class="h-5 w-[15px]" viewBox="0 0 15 20" fill="currentColor"><path d="M0 0 15 10 0 20Z"/></svg></button>
    <button type="button" aria-label="Step forward" class="ml-[15px]"><svg class="h-5 w-[17px]" viewBox="0 0 17 20" fill="currentColor"><path d="M0 6H2.500V14H0ZM4 2 16 10 4 18Z"/></svg></button>
    <button type="button" aria-label="Go to end" class="ml-4"><svg class="h-5 w-4" viewBox="0 0 16 20" fill="currentColor"><path d="M0 2 13 10 0 18ZM13 1H15.500V19H13Z"/></svg></button>
    <svg class="ml-[15px] h-10 w-4" viewBox="0 0 16 40" fill="#666" aria-label="Timeline marker"><path d="M0 0H16V5L9.500 11V40H6.500V11L0 5Z"/></svg>
    <button type="button" aria-label="Timeline settings" class="ml-auto text-[#888]"><svg class="h-5 w-5"><use href="#gear"/></svg></button>
  </footer>
</main>

<script>
  // Sketch grid: 52 cells each way, a heavier line every fifth cell from the origin
  const ox = 1211.3, oy = 537.4, sx = 15.87, sz = 18.33, slope = 0.5765;
  const first = -25, last = 27;
  let minor = '', major = '', columns = '';
  for (let k = first; k <= last; k++) {
    const x = ox + k * sx, y = oy + k * sx * slope;
    const v = `M${x} ${y + first * sz}V${y + last * sz}`;
    const h = `M${ox + first * sx} ${oy + first * sx * slope + k * sz}L${ox + last * sx} ${oy + last * sx * slope + k * sz}`;
    if (k % 5 === 0) { columns += v; major += h; } else minor += v + h;
  }
  document.getElementById('grid').innerHTML =
    `<path d="${minor}" stroke="#e8e8e8"/><path d="${columns}" stroke="#dcdcdc" stroke-width="1.200"/><path d="${major}" stroke="#d6d6d6" stroke-width="1.200"/>`;
</script>
</body>
</html>
